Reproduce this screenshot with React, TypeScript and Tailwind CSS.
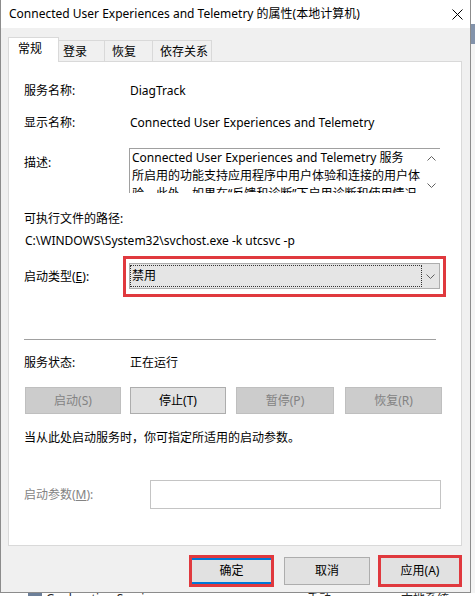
import React from 'react';

const font = "font-['Noto_Sans','Noto_Sans_CJK_SC',sans-serif]";

const Chevron: React.FC<{ up?: boolean }> = ({ up }) => (
  <svg width="9" height="5" viewBox="0 0 9 5" className="block">
    <polyline
      points={up ? '0.5,4.5 4.5,0.5 8.5,4.5' : '0.5,0.5 4.5,4.5 8.5,0.5'}
      fill="none"
      stroke="#606060"
      strokeWidth="1"
    />
  </svg>
);

const ActionButton: React.FC<{ label: string; enabled?: boolean; w: string; ml: string }> = ({ label, enabled, w, ml }) => (
  <div
    className={`${w} ${ml} h-[27px] flex items-center justify-center border ${
      enabled ? 'bg-[#e1e1e1] border-[#adadad] text-black' : 'bg-[#cccccc] border-[#bfbfbf] text-[#838383]'
    }`}
  >
    {label}
  </div>
);

export default function App() {
  return (
    <div className={`w-[475px] h-[596px] bg-white flex flex-col overflow-hidden text-[12px] leading-[16px] text-black ${font}`}>
      <div className="flex h-[593px]">
        {/* Dialog window */}
        <div className="w-[471px] h-[593px] flex flex-col bg-[#f0f0f0] border-l border-r border-b border-[#8c8c8c]">
          {/* Title bar */}
          <div className="h-[28px] bg-white flex items-center justify-between pl-[8px] pr-[7px]">
            <span className="whitespace-nowrap">Connected User Experiences and Telemetry 的属性(本地计算机)</span>
            <svg width="11" height="11" viewBox="0 0 11 11">
              <path d="M0.5 0.5 L10.5 10.5 M10.5 0.5 L0.5 10.5" stroke="#000" strokeWidth="1" />
            </svg>
          </div>

          {/* Tabs */}
          <div className="flex items-end h-[25px] mt-[9px] ml-[7px] -mb-px relative z-10">
            <div className="w-[51px] h-[25px] bg-white border-t border-l border-r border-[#d9d9d9] pl-[9px] pt-[3px]">常规</div>
            <div className="w-[46px] h-[22px] border-t border-r border-[#d9d9d9] pl-[4px] pt-[3px]">登录</div>
            <div className="w-[48px] h-[22px] border-t border-r border-[#d9d9d9] pl-[7px] pt-[3px]">恢复</div>
            <div className="w-[59px] h-[22px] border-t border-r border-[#d9d9d9] pl-[7px] pt-[3px]">依存关系</div>
          </div>

          {/* Tab panel */}
          <div className="ml-[7px] w-[454px] h-[485px] bg-white border border-[#d9d9d9] pl-[15px] pt-[21px] flex flex-col">
            <div className="flex h-[16px]">
              <span className="w-[106px]">服务名称:</span>
              <span>DiagTrack</span>
            </div>
            <div className="flex h-[16px] mt-[16px]">
              <span className="w-[106px]">显示名称:</span>
              <span>Connected User Experiences and Telemetry</span>
            </div>

            <div className="flex mt-[17px]">
              <span className="w-[105px] pt-[7px]">描述:</span>
              <div className="w-[311px] h-[45px] border-t border-l border-[#a0a0a0] flex overflow-hidden">
                <div className="flex-1 pl-[2px] leading-[18px] whitespace-nowrap overflow-hidden">
                  <div>Connected User Experiences and Telemetry 服务</div>
                  <div>所启用的功能支持应用程序中用户体验和连接的用户体</div>
                  <div>验。此外，如果在“反馈和诊断”下启用诊断和使用情况</div>
                </div>
                <div className="w-[17px] flex flex-col items-center justify-between pt-[7px] pb-[5px]">
                  <Chevron up />
                  <Chevron />
                </div>
              </div>
            </div>

            <div className="h-[16px] mt-[18px]">可执行文件的路径:</div>
            <div className="h-[16px] mt-[6px] pl-[1px]">C:\WINDOWS\System32\svchost.exe -k utcsvc -p</div>

            <div className="flex items-center mt-[7px]">
              <span className="w-[99px]">启动类型(<span className="underline">E</span>):</span>
              <div className="border-[3px] border-[#e0393e] pt-[4px] pb-[5px] px-[3px]">
                <div className="w-[311px] h-[26px] bg-[#e5e5e5] border border-[#adadad] flex items-center">
                  <div className="w-[292px] h-[22px] border border-dotted border-[#333] flex items-center pl-[1px]">禁用</div>
                  <div className="flex-1 flex justify-center">
                    <Chevron />
                  </div>
                </div>
              </div>
            </div>

            <div className="w-[412px] h-px bg-[#a0a0a0] mt-[42px]" />

            <div className="flex h-[16px] mt-[15px]">
              <span className="w-[106px]">服务状态:</span>
              <span>正在运行</span>
            </div>

            <div className="flex mt-[16px]">
              <ActionButton label="启动(S)" w="w-[96px]" ml="ml-[1px]" />
              <ActionButton label="停止(T)" enabled w="w-[96px]" ml="ml-[9px]" />
              <ActionButton label="暂停(P)" w="w-[98px]" ml="ml-[10px]" />
              <ActionButton label="恢复(R)" w="w-[97px]" ml="ml-[11px]" />
            </div>

            <div className="h-[16px] mt-[16px]">当从此处启动服务时，你可指定所适用的启动参数。</div>

            <div className="flex items-center mt-[34px]">
              <span className="w-[126px] text-[#838383]">启动参数(<span className="underline">M</span>):</span>
              <div className="w-[291px] h-[29px] border border-[#c4c4c4] bg-white" />
            </div>
          </div>

          {/* Dialog buttons */}
          <div className="flex items-center mt-[9px] ml-[188px]">
            <div className="w-[85px] h-[32px] border-[3px] border-[#e0393e] flex">
              <div className="flex-1 bg-[#e1e1e1] border-y-2 border-[#0078d7] flex items-center justify-center">确定</div>
            </div>
            <div className="w-[86px] h-[28px] ml-[10px] bg-[#e1e1e1] border border-[#adadad] flex items-center justify-center">取消</div>
            <div className="w-[84px] h-[32px] ml-[8px] border-[3px] border-[#e0393e] flex">
              <div className="flex-1 bg-[#e1e1e1] flex items-center justify-center">应用(A)</div>
            </div>
          </div>
        </div>

        {/* Background to the right */}
        <div className="flex-1 flex flex-col">
          <div className="h-[24px] bg-white" />
          <div className="h-[20px] bg-[#8393ab]" />
          <div className="flex-1 bg-[#f4f4f4]" />
        </div>
      </div>

      {/* Background below the window */}
      <div className="h-[3px] overflow-hidden flex items-start text-[#222] leading-[12px] whitespace-nowrap">
        <div className="ml-[28px] w-[14px] h-[3px] bg-[#6c7f99]" />
        <span className="ml-[4px]">Geolocation Service</span>
        <span className="ml-[150px]">手动</span>
        <span className="ml-[70px]">本地系统</span>
      </div>
    </div>
  );
}
